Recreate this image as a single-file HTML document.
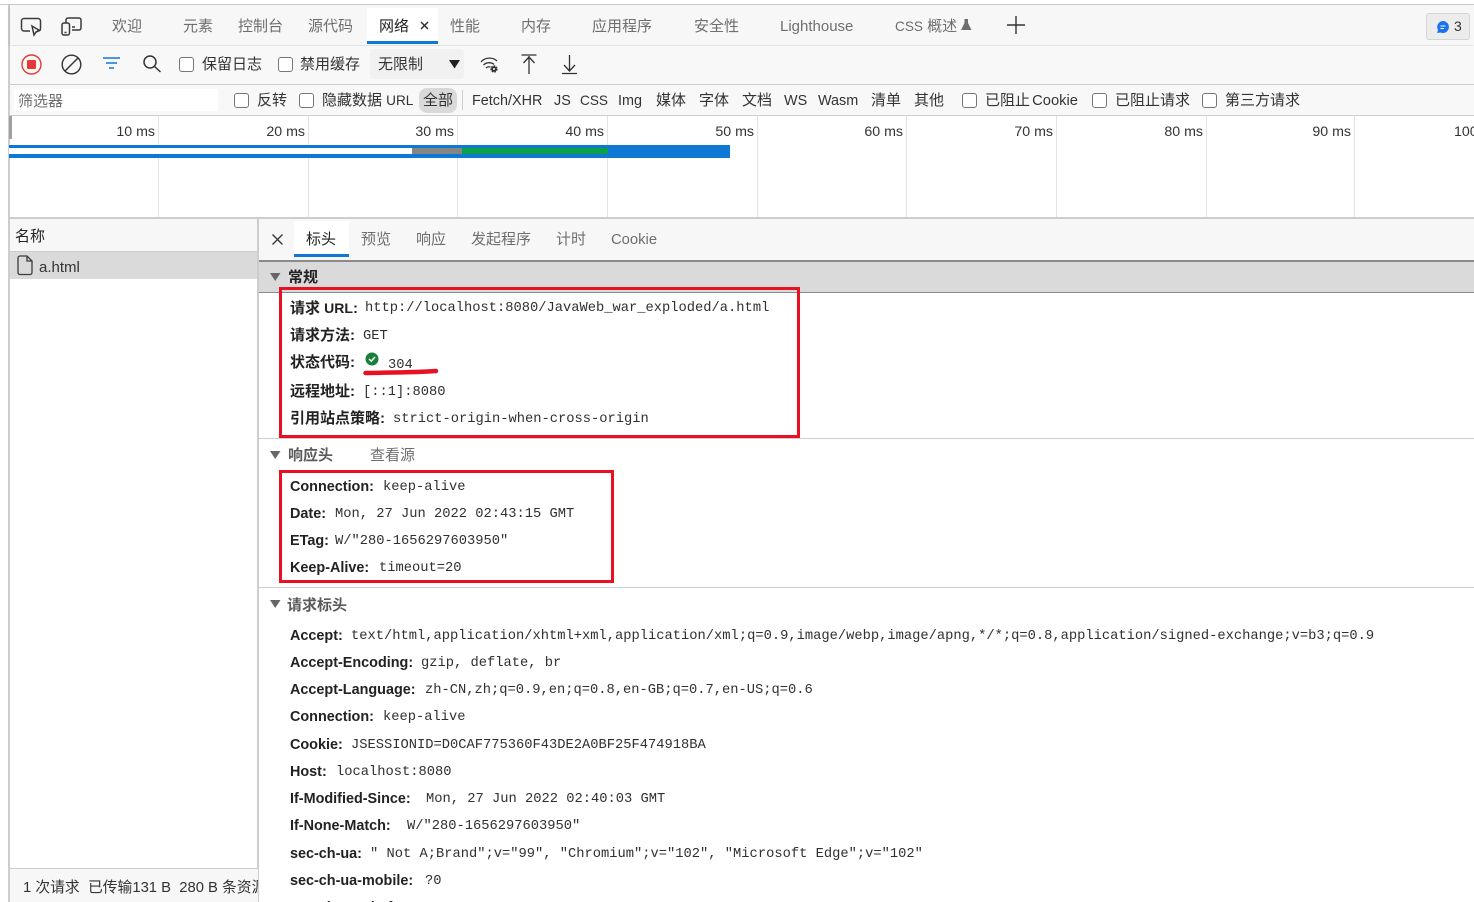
<!DOCTYPE html>
<html lang="zh-CN"><head><meta charset="utf-8"><title>DevTools</title>
<style>
html,body{margin:0;padding:0;width:1474px;height:902px;overflow:hidden;background:#fff}
body{position:relative;font-family:"Liberation Sans","Noto Sans CJK SC",sans-serif;font-size:15px;color:#333}
.t,.b,.m,.g{position:absolute;white-space:nowrap;line-height:20px;margin-top:1px}
.g{color:#6e6e6e}
.b{font-weight:bold;color:#222}
.l{font-size:14.4px}
.m{font-family:"Liberation Mono","Noto Sans CJK SC",monospace;font-size:13.75px;color:#303030}
.r{position:absolute;box-sizing:border-box}
.c{position:absolute;width:13px;height:13px;border:1px solid #767676;border-radius:3px;background:#fff;box-sizing:content-box}
svg{position:absolute;overflow:visible}
.tm{position:absolute;top:122px;line-height:20px;font-size:14.2px;color:#333;text-align:right;width:80px;white-space:nowrap}
.gl{position:absolute;top:116px;width:1px;height:101px;background:#e3e3e3}
</style></head><body>
<!-- frame -->
<div class="r" style="left:0;top:4px;width:1474px;height:1px;background:#cbcdd1"></div>
<div class="r" style="left:8px;top:4px;width:2px;height:898px;background:#cbcdd1"></div>
<!-- tab bar -->
<div class="r" style="left:10px;top:5px;width:1464px;height:40px;background:#f7f7f7;box-shadow:0 1px 3px rgba(0,0,0,.18)"></div>
<div class="r" style="left:10px;top:46px;width:1464px;height:38px;background:#f8f8f8"></div>
<div class="r" style="left:367px;top:8px;width:71px;height:33px;background:#fff"></div>
<div class="r" style="left:367px;top:41px;width:71px;height:3px;background:#0f78d4"></div>
<svg style="left:0;top:0" width="100" height="50" fill="none" stroke="#3a3a3a" stroke-width="1.5">
<path d="M30 31H24a2.500 2.500 0 0 1-2.500-2.500V21a2.500 2.500 0 0 1 2.500-2.500h14a2.500 2.500 0 0 1 2.500 2.500v7.500A2.500 2.500 0 0 1 38 31h-1"/>
<path d="M32 26l2 9 2-3 3.500-1.500z"/>
<rect x="62" y="23" width="7.500" height="12" rx="2"/>
<path d="M66 23v-3a2 2 0 0 1 2-2h11a2 2 0 0 1 2 2v8a2 2 0 0 1-2 2h-7M72 27h3M64.500 32.500h2"/>
</svg>
<div class="g" style="left:112px;top:16px">欢迎</div>
<div class="g" style="left:183px;top:16px">元素</div>
<div class="g" style="left:238px;top:16px">控制台</div>
<div class="g" style="left:308px;top:16px">源代码</div>
<div class="t" style="left:379px;top:16px;color:#222">网络</div>
<svg style="left:420px;top:21px" width="9" height="9" fill="none" stroke="#333" stroke-width="1.500"><path d="M1 1l7 7M8 1l-7 7"/></svg>
<div class="g" style="left:450px;top:16px">性能</div>
<div class="g" style="left:521px;top:16px">内存</div>
<div class="g" style="left:592px;top:16px">应用程序</div>
<div class="g" style="left:694px;top:16px">安全性</div>
<div class="g" style="left:780px;top:16px">Lighthouse</div>
<div class="g" style="left:895px;top:16px"><span style="font-size:13.6px">CSS</span> 概述</div>
<svg style="left:960px;top:18px" width="13" height="13" fill="#6e6e6e"><path d="M4.500 1h3.500v4l3.500 7H1l3.500-7z"/></svg>
<svg style="left:1006px;top:15px" width="20" height="20" fill="none" stroke="#333" stroke-width="1.400"><path d="M10 1v18M1 10h18"/></svg>
<div class="r" style="left:1426px;top:13px;width:44px;height:27px;background:#ececec;border:1px solid #d5d5d5;border-radius:3px"></div>
<svg style="left:1436px;top:20px" width="14" height="14"><path d="M7 1a6 6 0 1 1-2.500 11.500L1 13l1-3A6 6 0 0 1 7 1z" fill="#1a73e8"/><path d="M4.500 6h5M4.500 8.500h3.500" stroke="#fff" stroke-width="1"/></svg>
<div class="t" style="left:1454px;top:15px;font-size:14px">3</div>
<!-- toolbar -->
<svg style="left:0;top:45px" width="170" height="40" fill="none">
<circle cx="31.500" cy="19.500" r="9.500" stroke="#e53935" stroke-width="1.400"/><rect x="27" y="15" width="9" height="9" rx="1" fill="#e53935"/>
<circle cx="71.500" cy="19.500" r="9.300" stroke="#333" stroke-width="1.400"/><path d="M65 26l13-13" stroke="#333" stroke-width="1.400"/>
<path d="M103 13h17M106 18h11M109 23h5" stroke="#0f78d4" stroke-width="1.400"/>
<circle cx="150" cy="17" r="6" stroke="#333" stroke-width="1.500"/><path d="M154.500 21.500l6 5.500" stroke="#333" stroke-width="1.500"/>
</svg>
<div class="c" style="left:179px;top:57px"></div>
<div class="t" style="left:202px;top:54px">保留日志</div>
<div class="c" style="left:278px;top:57px"></div>
<div class="t" style="left:300px;top:54px">禁用缓存</div>
<div class="r" style="left:370px;top:49px;width:94px;height:30px;background:#f1f1f1;border-radius:3px"></div>
<div class="t" style="left:378px;top:54px">无限制</div>
<svg style="left:449px;top:60px" width="12" height="9" fill="#222"><path d="M0 0h11L5.500 8.500z"/></svg>
<svg style="left:480px;top:56px" width="20" height="20" fill="none" stroke="#333" stroke-width="1.300">
<path d="M1 6c4-5 12-5 16-1M3.500 9c3-3 8-3 10.500-.5M6 12c1.500-1.500 3-1.500 4.500-1"/><circle cx="14" cy="13" r="2.800" fill="#333" stroke-width="1.800" stroke-dasharray="1.500 1"/><circle cx="14" cy="13" r="1" fill="#fff" stroke="none"/></svg>
<svg style="left:520px;top:53px" width="20" height="22" fill="none" stroke="#333" stroke-width="1.300"><path d="M1.500 2h15M9 3v18M3.500 10L9 4l5.500 6"/></svg>
<svg style="left:560px;top:53px" width="20" height="22" fill="none" stroke="#333" stroke-width="1.300"><path d="M2 20.500h15M9.500 2v16M4 12l5.500 6 5.500-6"/></svg>
<div class="r" style="left:10px;top:84px;width:1464px;height:1px;background:#cbcdd1"></div>
<!-- filter row -->
<div class="r" style="left:10px;top:85px;width:1464px;height:30px;background:#f8f8f8"></div>
<div class="r" style="left:14px;top:89px;width:204px;height:22px;background:#fff"></div>
<div class="g" style="left:18px;top:91px">筛选器</div>
<div class="c" style="left:234px;top:93px"></div>
<div class="t" style="left:257px;top:90px">反转</div>
<div class="c" style="left:299px;top:93px"></div>
<div class="t" style="left:322px;top:90px">隐藏数据 <span class="l" style="font-size:13.6px">URL</span></div>
<div class="r" style="left:419px;top:88px;width:38px;height:25px;background:#d9d9d9;border-radius:8px"></div>
<div class="t" style="left:423px;top:90px">全部</div>
<div class="r" style="left:462px;top:90px;width:1px;height:20px;background:#ccc"></div>
<div class="t l" style="left:472px;top:90px">Fetch/XHR</div>
<div class="t l" style="left:554px;top:90px">JS</div>
<div class="t l" style="left:580px;top:90px;font-size:13.6px">CSS</div>
<div class="t l" style="left:618px;top:90px">Img</div>
<div class="t" style="left:656px;top:90px">媒体</div>
<div class="t" style="left:699px;top:90px">字体</div>
<div class="t" style="left:742px;top:90px">文档</div>
<div class="t l" style="left:784px;top:90px">WS</div>
<div class="t l" style="left:818px;top:90px">Wasm</div>
<div class="t" style="left:871px;top:90px">清单</div>
<div class="t" style="left:914px;top:90px">其他</div>
<div class="c" style="left:962px;top:93px"></div>
<div class="t" style="left:985px;top:90px">已阻止 <span class="l" style="font-size:14.7px;margin-left:-2px">Cookie</span></div>
<div class="c" style="left:1092px;top:93px"></div>
<div class="t" style="left:1115px;top:90px">已阻止请求</div>
<div class="c" style="left:1202px;top:93px"></div>
<div class="t" style="left:1225px;top:90px">第三方请求</div>
<div class="r" style="left:10px;top:115px;width:1464px;height:1px;background:#cbcdd1"></div>
<!-- timeline -->
<div class="r" style="left:9px;top:116px;width:3px;height:23px;background:#a0a0a0"></div>
<div class="gl" style="left:158px"></div><div class="gl" style="left:308px"></div><div class="gl" style="left:457px"></div><div class="gl" style="left:607px"></div><div class="gl" style="left:757px"></div><div class="gl" style="left:906px"></div><div class="gl" style="left:1056px"></div><div class="gl" style="left:1206px"></div><div class="gl" style="left:1354px"></div>
<div class="tm" style="left:75px">10 ms</div><div class="tm" style="left:225px">20 ms</div><div class="tm" style="left:374px">30 ms</div><div class="tm" style="left:524px">40 ms</div><div class="tm" style="left:674px">50 ms</div><div class="tm" style="left:823px">60 ms</div><div class="tm" style="left:973px">70 ms</div><div class="tm" style="left:1123px">80 ms</div><div class="tm" style="left:1271px">90 ms</div>
<div class="t" style="left:1454px;top:121px;font-size:14.2px">100 ms</div>
<div class="r" style="left:9px;top:145px;width:721px;height:3px;background:#0f78d4"></div>
<div class="r" style="left:9px;top:154px;width:721px;height:4px;background:#0f78d4"></div>
<div class="r" style="left:9px;top:148px;width:403px;height:6px;background:#fff"></div>
<div class="r" style="left:412px;top:148px;width:50px;height:6px;background:#858585"></div>
<div class="r" style="left:462px;top:148px;width:146px;height:6px;background:#0ba14b"></div>
<div class="r" style="left:608px;top:148px;width:122px;height:6px;background:#0f78d4"></div>
<div class="r" style="left:10px;top:217px;width:1464px;height:2px;background:#cbcdd1"></div>
<!-- left pane -->
<div class="r" style="left:10px;top:219px;width:247px;height:32px;background:#f7f7f7"></div>
<div class="r" style="left:10px;top:251px;width:247px;height:1px;background:#cbcdd1"></div>
<div class="r" style="left:10px;top:252px;width:247px;height:27px;background:#dadada"></div>
<div class="r" style="left:257px;top:219px;width:2px;height:683px;background:#cbcdd1"></div>
<div class="t" style="left:15px;top:226px;color:#222">名称</div>
<svg style="left:17px;top:255px" width="17" height="21" fill="none" stroke="#3a3a3a" stroke-width="1.300"><path d="M3 1h7l5 5v11.500a2 2 0 0 1-2 2H3a2 2 0 0 1-2-2V3a2 2 0 0 1 2-2zM10 1v5h5"/></svg>
<div class="t" style="left:39px;top:257px">a.html</div>
<div class="r" style="left:10px;top:868px;width:247px;height:1px;background:#cbcdd1"></div>
<div class="r" style="left:10px;top:869px;width:248px;height:33px;background:#f7f7f7"></div>
<div class="r" style="left:10px;top:869px;width:248px;height:33px;overflow:hidden"><div class="t" style="left:13px;top:8px;font-size:14.8px">1 次请求&nbsp; 已传输131 B&nbsp; 280 B 条资源</div></div>
<!-- right pane tabs -->
<div class="r" style="left:259px;top:219px;width:1215px;height:41px;background:#f7f7f7"></div>
<div class="r" style="left:294px;top:221px;width:55px;height:33px;background:#fff"></div>
<div class="r" style="left:294px;top:254px;width:55px;height:3px;background:#0f78d4"></div>
<svg style="left:272px;top:234px" width="11" height="11" fill="none" stroke="#333" stroke-width="1.300"><path d="M.5.500l10 10M10.500.500l-10 10"/></svg>
<div class="t" style="left:306px;top:229px;color:#222">标头</div>
<div class="g" style="left:361px;top:229px">预览</div>
<div class="g" style="left:416px;top:229px">响应</div>
<div class="g" style="left:471px;top:229px">发起程序</div>
<div class="g" style="left:556px;top:229px">计时</div>
<div class="g" style="left:611px;top:229px;font-size:14.8px">Cookie</div>
<div class="r" style="left:259px;top:260px;width:1215px;height:2px;background:#8a8a8a"></div>
<div class="r" style="left:259px;top:262px;width:1215px;height:30px;background:#dadada"></div>
<div class="r" style="left:259px;top:292px;width:1215px;height:1px;background:#8a8a8a"></div>
<svg style="left:270px;top:273px" width="11" height="9" fill="#666"><path d="M0 0h10.500L5.200 8z"/></svg>
<div class="b" style="left:288px;top:267px">常规</div>
<div class="b" style="left:290px;top:297px">请求 <span class="l" style="font-size:14px">URL</span>:</div><div class="m" style="left:365px;top:298px">http://localhost:8080/JavaWeb_war_exploded/a.html</div>
<div class="b" style="left:290px;top:325px">请求方法:</div><div class="m" style="left:363px;top:326px">GET</div>
<div class="b" style="left:290px;top:352px">状态代码:</div>
<svg style="left:365px;top:352px" width="14" height="14"><circle cx="7" cy="7" r="6.500" fill="#188038"/><path d="M4 7l2.200 2.200L10 5" fill="none" stroke="#fff" stroke-width="1.500"/></svg>
<div class="m" style="left:388px;top:355px">304</div>
<svg style="left:362px;top:367px" width="78" height="10"><path d="M3.500 6C25 5.500 55 5.500 74 4" fill="none" stroke="#e81123" stroke-width="4.500" stroke-linecap="round"/></svg>
<div class="b" style="left:290px;top:381px">远程地址:</div><div class="m" style="left:363px;top:382px">[::1]:8080</div>
<div class="b" style="left:290px;top:408px">引用站点策略:</div><div class="m" style="left:393px;top:409px">strict-origin-when-cross-origin</div>
<div class="r" style="left:279px;top:287px;width:521px;height:151px;border:3px solid #e81123"></div>
<div class="r" style="left:259px;top:438px;width:1215px;height:1px;background:#cbcdd1"></div>
<svg style="left:270px;top:451px" width="11" height="9" fill="#666"><path d="M0 0h10.500L5.200 8z"/></svg>
<div class="b" style="left:288px;top:445px;color:#5a5a5a">响应头</div>
<div class="g" style="left:370px;top:445px">查看源</div>
<div class="r" style="left:279px;top:470px;width:335px;height:113px;border:3px solid #e81123"></div>
<div class="b l" style="left:290px;top:476px">Connection:</div><div class="m" style="left:383px;top:477px">keep-alive</div>
<div class="b l" style="left:290px;top:503px">Date:</div><div class="m" style="left:335px;top:504px">Mon, 27 Jun 2022 02:43:15 GMT</div>
<div class="b l" style="left:290px;top:530px">ETag:</div><div class="m" style="left:335px;top:531px">W/"280-1656297603950"</div>
<div class="b l" style="left:290px;top:557px">Keep-Alive:</div><div class="m" style="left:379px;top:558px">timeout=20</div>
<div class="r" style="left:259px;top:587px;width:1215px;height:1px;background:#cbcdd1"></div>
<svg style="left:270px;top:600px" width="11" height="9" fill="#666"><path d="M0 0h10.500L5.200 8z"/></svg>
<div class="b" style="left:287px;top:595px;color:#5a5a5a">请求标头</div>
<div class="b l" style="left:290px;top:625px">Accept:</div><div class="m" style="left:351px;top:626px">text/html,application/xhtml+xml,application/xml;q=0.9,image/webp,image/apng,*/*;q=0.8,application/signed-exchange;v=b3;q=0.9</div>
<div class="b l" style="left:290px;top:652px">Accept-Encoding:</div><div class="m" style="left:421px;top:653px">gzip, deflate, br</div>
<div class="b l" style="left:290px;top:679px">Accept-Language:</div><div class="m" style="left:425px;top:680px">zh-CN,zh;q=0.9,en;q=0.8,en-GB;q=0.7,en-US;q=0.6</div>
<div class="b l" style="left:290px;top:706px">Connection:</div><div class="m" style="left:383px;top:707px">keep-alive</div>
<div class="b l" style="left:290px;top:734px">Cookie:</div><div class="m" style="left:351px;top:735px">JSESSIONID=D0CAF775360F43DE2A0BF25F474918BA</div>
<div class="b l" style="left:290px;top:761px">Host:</div><div class="m" style="left:336px;top:762px">localhost:8080</div>
<div class="b l" style="left:290px;top:788px">If-Modified-Since:</div><div class="m" style="left:426px;top:789px">Mon, 27 Jun 2022 02:40:03 GMT</div>
<div class="b l" style="left:290px;top:815px">If-None-Match:</div><div class="m" style="left:407px;top:816px">W/"280-1656297603950"</div>
<div class="b l" style="left:290px;top:843px">sec-ch-ua:</div><div class="m" style="left:370px;top:844px">" Not A;Brand";v="99", "Chromium";v="102", "Microsoft Edge";v="102"</div>
<div class="b l" style="left:290px;top:870px">sec-ch-ua-mobile:</div><div class="m" style="left:425px;top:871px">?0</div>
<div class="b l" style="left:290px;top:897px">sec-ch-ua-platform:</div>
</body></html>
